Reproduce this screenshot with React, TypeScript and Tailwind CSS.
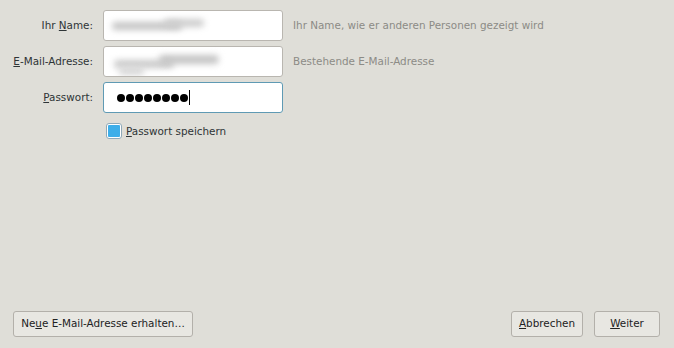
import React from 'react';

const font = { fontFamily: '"DejaVu Sans", "Liberation Sans", sans-serif' };

const Field: React.FC<{ children?: React.ReactNode; focused?: boolean }> = ({ children, focused }) => (
  <div
    className={`relative h-[31px] w-[180px] overflow-hidden rounded-[3px] border bg-white ${
      focused ? 'border-[#5f9ab4]' : 'border-[#b9b6b0]'
    }`}
  >
    {children}
  </div>
);

const btn = 'h-[26px] rounded-[3px] border border-[#b3b0aa] bg-[#e8e7e2] text-[10.4px] text-[#222]';

export default function App() {
  return (
    <div className="flex h-[348px] w-[674px] flex-col bg-[#dfded8] text-[10.4px] text-[#2e3436]" style={font}>
      <div className="grid grid-cols-[93px_180px_auto] items-center gap-x-[10px] gap-y-[5px] pt-[10px]">
        <div className="text-right">
          Ihr <span className="underline">N</span>ame:
        </div>
        <Field>
          {/* verwischter Name */}
          <div className="absolute left-[8px] top-[11px] h-[8px] w-[70px] rounded-full bg-[#c4c4c4] blur-[3px]" />
          <div className="absolute left-[60px] top-[8px] h-[8px] w-[40px] rounded-full bg-[#cdcdcd] blur-[3px]" />
        </Field>
        <div className="text-[#8c8b86]">Ihr Name, wie er anderen Personen gezeigt wird</div>

        <div className="text-right">
          <span className="underline">E</span>-Mail-Adresse:
        </div>
        <Field>
          <div className="absolute left-[10px] top-[13px] h-[8px] w-[60px] rounded-full bg-[#c9c9c9] blur-[3px]" />
          <div className="absolute left-[55px] top-[8px] h-[9px] w-[60px] rounded-full bg-[#c4c4c4] blur-[3px]" />
          <div className="absolute left-[15px] top-[20px] h-[8px] w-[25px] rounded-full bg-[#d6d6d6] blur-[3px]" />
        </Field>
        <div className="text-[#8c8b86]">Bestehende E-Mail-Adresse</div>

        <div className="text-right">
          <span className="underline">P</span>asswort:
        </div>
        <Field focused>
          <div className="flex h-full items-center gap-[1px] pl-[13px]">
            {Array.from({ length: 8 }).map((_, i) => (
              <span key={i} className="h-[8px] w-[8px] rounded-full bg-black" />
            ))}
            <span className="h-[15px] w-[1px] bg-black" />
          </div>
        </Field>
        <div />
      </div>

      <div className="ml-[106px] mt-[10px] flex items-center gap-[4px]">
        <div className="h-[16px] w-[16px] rounded-[3px] border border-[#8fa9b8] bg-white p-[1px]">
          <div className="h-full w-full rounded-[1px] bg-[#3daee9]" />
        </div>
        <span className="pt-[1px]">
          <span className="underline">P</span>asswort speichern
        </span>
      </div>

      <div className="mt-auto flex items-center justify-between pb-[11px] pl-[13px] pr-[14px]">
        <button className={`${btn} w-[180px]`}>
          Ne<span className="underline">u</span>e E-Mail-Adresse erhalten…
        </button>
        <div className="flex gap-[11px]">
          <button className={`${btn} w-[72px]`}>
            <span className="underline">A</span>bbrechen
          </button>
          <button className={`${btn} w-[66px]`}>
            <span className="underline">W</span>eiter
          </button>
        </div>
      </div>
    </div>
  );
}
